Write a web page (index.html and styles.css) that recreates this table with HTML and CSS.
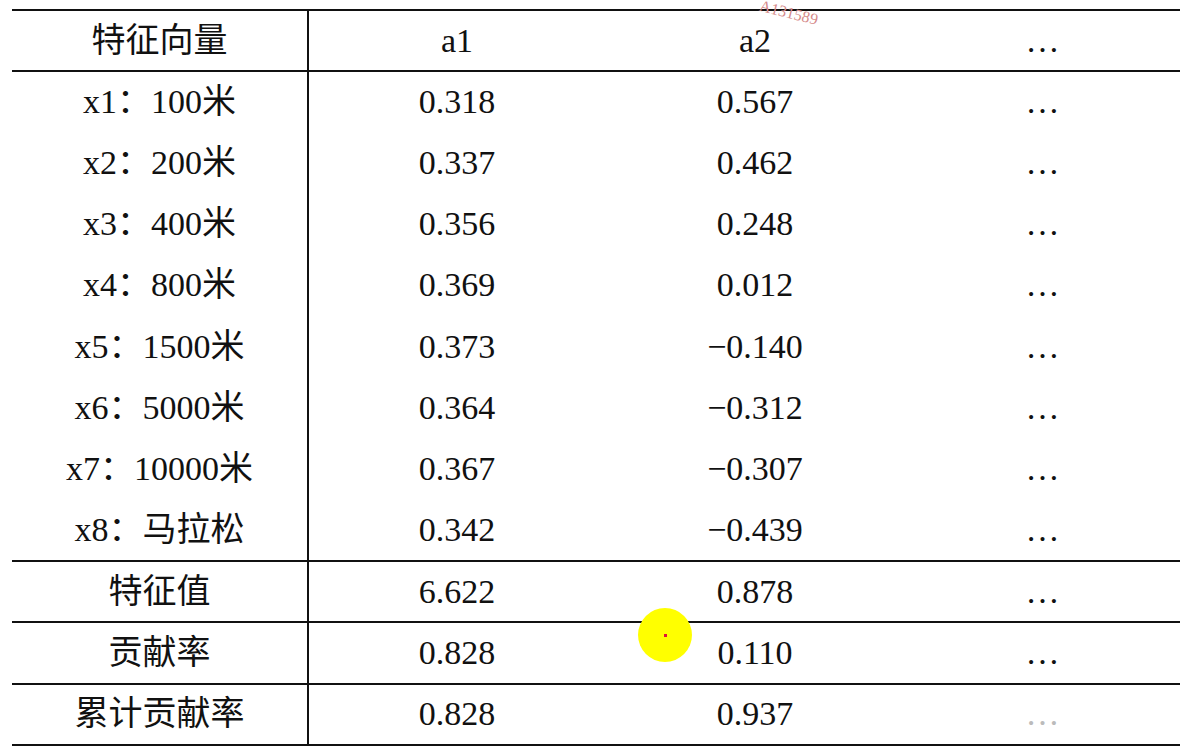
FILE: index.html
```html
<!DOCTYPE html>
<html lang="zh-CN">

<head>
    <meta charset="UTF-8">
    <meta name="viewport" content="width=device-width, initial-scale=1.0">
    <title>主成分分析 特征向量</title>
    <link rel="stylesheet" href="styles.css">
</head>

<body>
    <div class="slide">
        <table class="pca-table">
            <thead>
                <tr>
                    <th>特征向量</th>
                    <th>a1</th>
                    <th>a2</th>
                    <th>…</th>
                </tr>
            </thead>
            <tbody class="vectors">
                <tr><td>x1：100米</td><td>0.318</td><td>0.567</td><td>…</td></tr>
                <tr><td>x2：200米</td><td>0.337</td><td>0.462</td><td>…</td></tr>
                <tr><td>x3：400米</td><td>0.356</td><td>0.248</td><td>…</td></tr>
                <tr><td>x4：800米</td><td>0.369</td><td>0.012</td><td>…</td></tr>
                <tr><td>x5：1500米</td><td>0.373</td><td>−0.140</td><td>…</td></tr>
                <tr><td>x6：5000米</td><td>0.364</td><td>−0.312</td><td>…</td></tr>
                <tr><td>x7：10000米</td><td>0.367</td><td>−0.307</td><td>…</td></tr>
                <tr><td>x8：马拉松</td><td>0.342</td><td>−0.439</td><td>…</td></tr>
            </tbody>
            <tbody class="summary">
                <tr><td>特征值</td><td>6.622</td><td>0.878</td><td>…</td></tr>
                <tr><td>贡献率</td><td>0.828</td><td>0.110</td><td>…</td></tr>
                <tr><td>累计贡献率</td><td>0.828</td><td>0.937</td><td class="faint">…</td></tr>
            </tbody>
        </table>

        <!-- 录屏时的水印和鼠标指示 -->
        <span class="watermark">A131589</span>
        <span class="cursor-spot"><span class="cursor-dot"></span></span>
    </div>
</body>

</html>
```

FILE: styles.css
```css
body {
    margin: 0;
    background-color: #fff;
    font-family: "Liberation Serif", "Noto Sans CJK SC", serif;
    color: #111;
}

.slide {
    position: relative;
    width: 1203px;
    height: 752px;
    overflow: hidden;
    padding: 9px 0 0 12px;
    box-sizing: border-box;
}

.pca-table {
    border-collapse: collapse;
    table-layout: fixed;
    width: 1168px;
    font-size: 34px;
}

.pca-table th,
.pca-table td {
    padding: 0;
    text-align: center;
    font-weight: normal;
    line-height: 1;
    white-space: nowrap;
}

.pca-table tr {
    height: 61px;
}

.pca-table tbody.vectors tr {
    height: 61.25px;
}

.pca-table tbody.summary tr {
    height: 61.4px;
}

.pca-table th:nth-child(1),
.pca-table td:nth-child(1) {
    width: 295px;
    border-right: 2px solid #111;
}

.pca-table th:nth-child(2) {
    width: 296px;
}

.pca-table th:nth-child(3) {
    width: 300px;
}

.pca-table thead tr {
    border-top: 2px solid #111;
    border-bottom: 2px solid #111;
}

.pca-table tbody.vectors tr:last-child,
.pca-table tbody.summary tr {
    border-bottom: 2px solid #111;
}

.pca-table .faint {
    color: #bbb;
}

.watermark {
    position: absolute;
    left: 762px;
    top: -3px;
    font-family: "Liberation Serif", serif;
    font-size: 16px;
    color: #d58a8a;
    transform: rotate(14deg);
    transform-origin: left top;
}

.cursor-spot {
    position: absolute;
    left: 638px;
    top: 608px;
    width: 54px;
    height: 54px;
    border-radius: 50%;
    background-color: #ffff00;
    display: flex;
    align-items: center;
    justify-content: center;
}

.cursor-dot {
    width: 3px;
    height: 3px;
    background-color: #e0103a;
}
```
